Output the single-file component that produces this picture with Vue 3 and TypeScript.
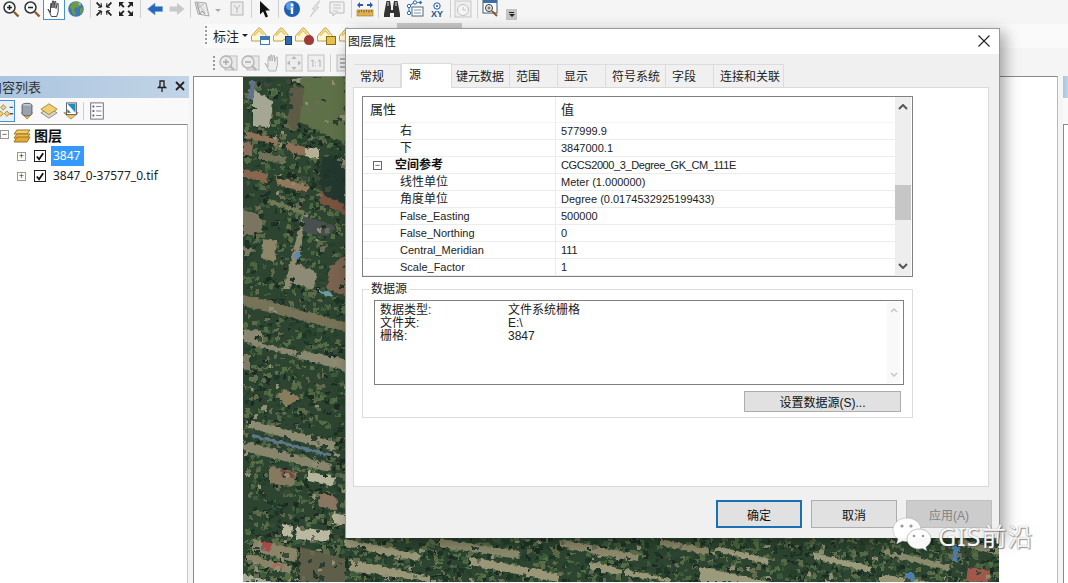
<template>
  <div class="app">
    <!-- 아이콘 심볼 -->
    <svg class="defs" width="0" height="0">
      <filter id="photo" x="0" y="0" width="100%" height="100%">
        <feTurbulence type="fractalNoise" baseFrequency="0.22" numOctaves="2" seed="4" result="n" />
        <feDisplacementMap in="SourceGraphic" in2="n" scale="5" xChannelSelector="R" yChannelSelector="G" />
        <feGaussianBlur stdDeviation="0.55" />
      </filter>
      <symbol id="i-zoomin" viewBox="0 0 18 18"><circle cx="7.5" cy="7.5" r="5.5" fill="#f4f8f8" stroke="#333" stroke-width="1.5"/><path d="M5 7.5h5M7.5 5v5" stroke="#222" stroke-width="1.5"/><path d="M12 12l4.5 4.5" stroke="#8a5a2a" stroke-width="2.4"/></symbol>
      <symbol id="i-zoomout" viewBox="0 0 18 18"><circle cx="7.5" cy="7.5" r="5.5" fill="#f4f8f8" stroke="#333" stroke-width="1.5"/><path d="M5 7.5h5" stroke="#222" stroke-width="1.5"/><path d="M12 12l4.5 4.5" stroke="#8a5a2a" stroke-width="2.4"/></symbol>
      <symbol id="i-hand" viewBox="0 0 18 18"><path d="M3 9l2.500 3.500V6l.7-3 .8 5 .5-7h1l.5 7 .8-6.500h1l.2 7 1.200-5h1v8l-1.500 5H6.500z" fill="#fff" stroke="#333" stroke-width=".9"/></symbol>
      <symbol id="i-globe" viewBox="0 0 18 18"><circle cx="9" cy="9" r="7.800" fill="#3b79b8"/><path d="M5 3l5-1.500 3 3-2 3-3 0-1 3 2 3-1 2.500-3-3-.5-4-2-2zM13 8l3 .5-.5 4-2.500 2z" fill="#6f9a3f"/><path d="M11 2l3 2-1 2z" fill="#d9c98c"/></symbol>
      <symbol id="i-fin" viewBox="0 0 18 18"><path d="M2 2l4 4V3l1 4-4 .5h2.500L1.500 3.500zM16 2l-4 4V3l-1 4 4 .5h-2.500l4-4zM2 16l4-4v3l1-4-4-.5h2.500l-4 4zM16 16l-4-4v3l-1-4 4-.5h-2.500l4 4z" fill="#222" stroke="#222" stroke-width=".5"/></symbol>
      <symbol id="i-fout" viewBox="0 0 18 18"><path d="M7 2H2v5l1.700-1.700 2.500 2.500 1.400-1.400-2.500-2.500zM11 2h5v5l-1.700-1.700-2.500 2.500-1.400-1.400 2.500-2.500zM7 16H2v-5l1.700 1.700 2.500-2.500 1.400 1.400-2.500 2.500zM11 16h5v-5l-1.700 1.700-2.500-2.500-1.400 1.400 2.500 2.500z" fill="#222"/></symbol>
      <symbol id="i-back" viewBox="0 0 18 18"><path d="M1.500 9L9 3v3.500h7.500v5H9V15z" fill="#2a66b8" stroke="#6fa0dc" stroke-width=".6"/></symbol>
      <symbol id="i-fwd" viewBox="0 0 18 18"><path d="M16.500 9L9 3v3.500H1.500v5H9V15z" fill="#c9c9c9"/></symbol>
      <symbol id="i-sel" viewBox="0 0 18 18"><path d="M2 2l11 1 3 13-11-2z" fill="#e8e8e8" stroke="#aaa"/><path d="M5 3l7 10M3 9l8-5" stroke="#bbb"/><path d="M4 3l3 11 2-3 3 3" fill="none" stroke="#999"/></symbol>
      <symbol id="i-box" viewBox="0 0 18 18"><rect x="3" y="2" width="12" height="13" fill="#ececec" stroke="#b5b5b5"/><path d="M6 5l3 4 3-4M9 9v4" stroke="#bbb" fill="none"/></symbol>
      <symbol id="i-cursor" viewBox="0 0 18 18"><path d="M4 1l10 9.500H9.500l2.500 6-2.400 1-2.500-6L4 14.500z" fill="#111"/></symbol>
      <symbol id="i-info" viewBox="0 0 18 18"><circle cx="9" cy="9" r="8" fill="#1f5fb2"/><circle cx="7" cy="6" r="4" fill="#5f9ade"/><circle cx="9" cy="5" r="1.400" fill="#fff"/><rect x="7.800" y="7.500" width="2.400" height="6.500" fill="#fff"/></symbol>
      <symbol id="i-bolt" viewBox="0 0 18 18"><path d="M13 1L6 9h3l-5 8 9-10h-3l4-6z" fill="#e4e4e4" stroke="#c4c4c4" stroke-width=".7"/></symbol>
      <symbol id="i-ident" viewBox="0 0 18 18"><path d="M2 2h14v11H8l-3 3v-3H2z" fill="#f2f2f2" stroke="#bbb"/><path d="M5 5h8M5 8h8M5 11h5" stroke="#c4c4c4"/></symbol>
      <symbol id="i-ruler" viewBox="0 0 18 18"><path d="M1 5l3-3v2h3v2H4v2zM17 5l-3-3v2h-3v2h3v2z" fill="#2a5fa8"/><rect x="1" y="10" width="16" height="6" fill="#e0b050" stroke="#a07a28" stroke-width=".6"/><path d="M3 10v3M5.500 10v2M8 10v3M10.500 10v2M13 10v3M15.500 10v2" stroke="#6b4f16" stroke-width=".7"/></symbol>
      <symbol id="i-bino" viewBox="0 0 18 18"><path d="M3.500 1h3.500l1 6v3h2V7l1-6h3.500l2.500 13v3H11v-4H7v4H1v-3z" fill="#333"/><rect x="4" y="2" width="2" height="4" fill="#8a8a8a"/><rect x="12" y="2" width="2" height="4" fill="#8a8a8a"/></symbol>
      <symbol id="i-net" viewBox="0 0 18 18"><rect x="6" y="7" width="11" height="9" fill="#fff" stroke="#567"/><path d="M8 10h7M8 13h7" stroke="#79a"/><circle cx="3" cy="6" r="1.700" fill="#fff" stroke="#2a6aa8"/><circle cx="3" cy="13" r="1.700" fill="#fff" stroke="#2a6aa8"/><circle cx="9" cy="2.500" r="1.700" fill="#fff" stroke="#2a6aa8"/><path d="M11 2.500h3M14 1l2 1.500L14 4z" stroke="#2a6aa8" fill="#2a6aa8" stroke-width=".8"/><path d="M3 8v3M4.500 5l3-2" stroke="#2a6aa8"/></symbol>
      <symbol id="i-clock" viewBox="0 0 18 18"><rect x="1" y="1" width="16" height="16" fill="#eee" stroke="#c8c8c8"/><circle cx="9" cy="10" r="5.500" fill="#f5f5f5" stroke="#c0c0c0"/><path d="M9 7v3h3" stroke="#c0c0c0" fill="none"/></symbol>
      <symbol id="i-zw" viewBox="0 0 18 18"><rect x="1" y="0" width="14" height="13" fill="#fff" stroke="#44586f"/><rect x="1" y="0" width="14" height="3" fill="#3a6ea8"/><circle cx="7" cy="8" r="3.500" fill="#f5f5f5" stroke="#333"/><path d="M5.300 8h3.400M7 6.300v3.400" stroke="#333" stroke-width=".8"/><path d="M10 11l5 5" stroke="#8a5a2a" stroke-width="2"/></symbol>
      <symbol id="i-label" viewBox="0 0 18 18"><path d="M1.500 10l7-8h1.500l6 7v2l-6 4h-8.500z" fill="#fff6d8" stroke="#c4a040"/><path d="M3 9.500L9 3l5 5.500-1.500.8L9 5.500 5 10z" fill="#ecc968"/></symbol>
      <symbol id="i-d-in" viewBox="0 0 20 20"><rect x="7" y="3" width="12" height="14" fill="#e8e8e8" stroke="#bdbdbd"/><circle cx="8" cy="9" r="6" fill="#ececec" stroke="#b5b5b5" stroke-width="1.400"/><path d="M5 9h6M8 6v6" stroke="#aaa" stroke-width="1.400"/><path d="M12 13l4 4" stroke="#b8b8b8" stroke-width="2.400"/></symbol>
      <symbol id="i-d-out" viewBox="0 0 20 20"><rect x="7" y="3" width="12" height="14" fill="#e8e8e8" stroke="#bdbdbd"/><circle cx="8" cy="9" r="6" fill="#ececec" stroke="#b5b5b5" stroke-width="1.400"/><path d="M5 9h6" stroke="#aaa" stroke-width="1.400"/><path d="M12 13l4 4" stroke="#b8b8b8" stroke-width="2.400"/></symbol>
      <symbol id="i-d-hand" viewBox="0 0 20 20"><path d="M3 10l3 4V6l1-3 1 5 .5-6h1.200l.5 6 1-5.500h1.200l.3 6 1.500-4.500h1.200v8l-1.500 6H7z" fill="#ececec" stroke="#b5b5b5"/></symbol>
      <symbol id="i-d-full" viewBox="0 0 20 20"><rect x="2" y="2" width="16" height="16" fill="#ececec" stroke="#c4c4c4"/><path d="M10 3l2.500 3h-5zM10 17l2.500-3h-5zM3 10l3-2.500v5zM17 10l-3-2.500v5z" fill="#b5b5b5"/></symbol>
      <symbol id="i-d-one" viewBox="0 0 20 20"><rect x="2" y="2" width="16" height="16" fill="#eee" stroke="#c0c0c0"/><path d="M5 8l2-1v7M9.500 9v.8M9.500 12v.8M12 8l2-1v7" stroke="#b0b0b0" fill="none"/></symbol>
      <symbol id="i-d-last" viewBox="0 0 20 20"><rect x="3" y="2" width="14" height="16" fill="#e8e8e8" stroke="#c0c0c0"/><path d="M6 6h8M6 10h8M6 14h8" stroke="#aaa" stroke-width="2"/></symbol>
      <symbol id="i-toc1" viewBox="0 0 20 20"><path d="M4 6l3-3 3 3-3 3z" fill="#f2cf7a" stroke="#a8842c"/><path d="M1 13l3-3 3 3-3 3z" fill="#f2cf7a" stroke="#a8842c"/><path d="M8 13l3-3 3 3-3 3z" fill="#f2cf7a" stroke="#a8842c"/><path d="M14 6h4M14 13h4" stroke="#555" stroke-width="1.500"/></symbol>
      <symbol id="i-toc2" viewBox="0 0 20 20"><path d="M4 12h12l-6 7z" fill="#efc45e" stroke="#b48a2c"/><ellipse cx="10" cy="4" rx="5.500" ry="2.500" fill="#c7ccd2" stroke="#556"/><path d="M4.500 4v9c0 1.500 2.500 2.500 5.500 2.500s5.500-1 5.500-2.500V4" fill="#9aa3ad" stroke="#556"/></symbol>
      <symbol id="i-toc3" viewBox="0 0 20 20"><path d="M1 12l9-5 9 5-9 6z" fill="#d7d7d0" stroke="#888"/><path d="M1 8l9-6 9 6-9 6z" fill="#f0ce76" stroke="#a8842c"/></symbol>
      <symbol id="i-toc4" viewBox="0 0 20 20"><path d="M2 12h16l-8 7z" fill="#efc45e" stroke="#b48a2c"/><rect x="5" y="1" width="11" height="13" fill="#fff" stroke="#556"/><path d="M6 2h9v10z" fill="#1f8fb5"/><path d="M6 8l4 4H6z" fill="#2a6a9a"/></symbol>
      <symbol id="i-list" viewBox="0 0 20 20"><rect x="3" y="1" width="14" height="18" fill="#fbfbfb" stroke="#667"/><rect x="5" y="4" width="2" height="2" fill="#555"/><rect x="5" y="9" width="2" height="2" fill="#555"/><rect x="5" y="14" width="2" height="2" fill="#555"/><path d="M9 5h6M9 10h6M9 15h6" stroke="#778"/></symbol>
      <symbol id="i-layers" viewBox="0 0 18 16"><path d="M4 3h13l-3 4H1z" fill="#f4cd72" stroke="#9a7420"/><path d="M4 7h13l-3 4H1z" fill="#eebb50" stroke="#9a7420"/><path d="M4 10h13l-3 5H1z" fill="#e5a93a" stroke="#9a7420"/></symbol>
    </svg>

    <!-- 상단 툴바 -->
    <div class="toolbar-main">
      <template v-for="(item, i) in mainTools" :key="i">
        <span v-if="item.icon === 'sep'" class="sep" :style="{ width: item.w + 'px' }"></span>
        <span v-else-if="item.icon === 'caret'" class="tool-slot caret-slot" :style="{ width: item.w + 'px' }"><i class="caret dim"></i></span>
        <span v-else-if="item.icon === 'xy'" class="tool-slot xy" :style="{ width: item.w + 'px' }">
          <svg width="10" height="8" viewBox="0 0 10 8"><circle cx="5" cy="4" r="3.200" fill="none" stroke="#1d5ea8"/><circle cx="5" cy="4" r="1" fill="#1d5ea8"/></svg>
          <b>XY</b>
        </span>
        <span v-else class="tool-slot" :class="{ active: item.icon === 'hand' }" :style="{ width: item.w + 'px' }">
          <svg class="ico"><use :href="'#i-' + item.icon" /></svg>
        </span>
      </template>
      <span class="overflow"><i class="bar"></i><i class="caret"></i></span>
    </div>

    <div class="toolbar-label">
      <span class="grip"></span>
      <span class="label-menu">标注<i class="caret"></i></span>
      <span v-for="n in labelIcons" :key="n" class="label-icon">
        <svg class="ico"><use href="#i-label" /></svg>
        <i class="mark" :class="n"></i>
      </span>
      <span class="ghost-tab"></span>
    </div>

    <div class="toolbar-dim">
      <span class="grip short"></span>
      <svg v-for="n in dimIcons" :key="n" class="dim-ico"><use :href="'#i-d-' + n" /></svg>
      <span class="sep dim-sep"></span>
      <svg class="dim-ico"><use href="#i-d-last" /></svg>
    </div>

    <div class="workspace">
      <!-- 내용 목록 -->
      <aside class="toc">
        <div class="dock-head">
          <span class="dock-title">内容列表</span>
          <span class="dock-btns">
            <svg width="10" height="12" viewBox="0 0 10 12"><path d="M3 1h4v5l1.500 1.500h-7L3 6zM5 7.500V12" fill="none" stroke="#222" stroke-width="1.300"/></svg>
            <svg width="10" height="10" viewBox="0 0 10 10"><path d="M1 1l8 8M9 1l-8 8" stroke="#222" stroke-width="1.800"/></svg>
          </span>
        </div>
        <div class="toc-tools">
          <span class="toc-tool on"><svg class="toc-ico"><use href="#i-toc1" /></svg></span>
          <span class="toc-tool"><svg class="toc-ico"><use href="#i-toc2" /></svg></span>
          <span class="toc-tool"><svg class="toc-ico"><use href="#i-toc3" /></svg></span>
          <span class="toc-tool"><svg class="toc-ico"><use href="#i-toc4" /></svg></span>
          <span class="sep toc-sep"></span>
          <span class="toc-tool"><svg class="toc-ico"><use href="#i-list" /></svg></span>
        </div>
        <div class="tree">
          <div class="tree-row root">
            <span class="exp">−</span>
            <svg class="layers" width="18" height="16"><use href="#i-layers" /></svg>
            <b class="root-name">图层</b>
          </div>
          <div v-for="(l, i) in layers" :key="l" class="tree-row child">
            <span class="exp">+</span>
            <span class="check"><svg width="11" height="11" viewBox="0 0 11 11"><path d="M2 5.500l2.500 3L9 2" fill="none" stroke="#111" stroke-width="2"/></svg></span>
            <span class="layer-name" :class="{ selected: i === 0 }">{{ l }}</span>
          </div>
        </div>
      </aside>

      <!-- 지도 -->
      <main class="map-frame">
        <svg class="map" viewBox="243 78 756 505" width="756" height="505" preserveAspectRatio="none">
          <rect x="243" y="78" width="756" height="505" fill="#2d4530" />
          <g filter="url(#photo)">
            <rect v-for="(s, i) in speckles" :key="'s' + i" :x="s.x" :y="s.y" :width="s.w" :height="s.h" :fill="s.c" />
            <polygon v-for="(p, i) in mapShapes" :key="'p' + i" :points="p.pts" :fill="p.c" />
            <rect v-for="(s, i) in roofSpeckles" :key="'r' + i" :x="s.x" :y="s.y" :width="s.w" :height="s.h" :fill="s.c" />
          </g>
        </svg>
      </main>

      <aside class="dock-right">
        <div class="dock-head"></div>
        <div class="right-tools"></div>
        <div class="tree"></div>
      </aside>
    </div>

    <!-- 图层属性 대화상자 -->
    <section class="dialog">
      <header class="dialog-title">
        <span>图层属性</span>
        <svg width="12" height="12" viewBox="0 0 12 12"><path d="M.5.5l11 11M11.500.5l-11 11" stroke="#222" stroke-width="1.100"/></svg>
      </header>
      <div class="dialog-body">
        <div class="tabs">
          <span
            v-for="t in tabs"
            :key="t.name"
            class="tab"
            :class="{ current: t.name === '源' }"
            :style="{ width: t.w + 'px' }"
          >{{ t.name }}</span>
        </div>
        <div class="tab-panel">
          <div class="prop-grid">
            <div class="prop-table">
              <div class="prop-row head">
                <span class="col-a">属性</span>
                <span class="col-b">值</span>
              </div>
              <div v-for="r in props" :key="r.k" class="prop-row" :class="{ group: r.group }">
                <span class="col-a" :class="{ latin: isLatin(r.k) }">
                  <i v-if="r.group" class="exp small">−</i>
                  {{ r.k }}
                </span>
                <span class="col-b">{{ r.v }}</span>
              </div>
            </div>
            <div class="scrollbar">
              <svg width="10" height="6" viewBox="0 0 10 6"><path d="M1 5l4-4 4 4" fill="none" stroke="#555" stroke-width="2"/></svg>
              <span class="thumb"></span>
              <svg width="10" height="6" viewBox="0 0 10 6"><path d="M1 1l4 4 4-4" fill="none" stroke="#555" stroke-width="2"/></svg>
            </div>
          </div>

          <fieldset class="source">
            <legend>数据源</legend>
            <div class="source-list">
              <div v-for="s in sourceInfo" :key="s.k" class="source-line">
                <span class="source-key">{{ s.k }}</span>
                <span>{{ s.v }}</span>
              </div>
              <div class="list-scroll">
                <svg width="8" height="5" viewBox="0 0 8 5"><path d="M1 4l3-3 3 3" fill="none" stroke="#c8c8c8" stroke-width="1.500"/></svg>
                <svg width="8" height="5" viewBox="0 0 8 5"><path d="M1 1l3 3 3-3" fill="none" stroke="#c8c8c8" stroke-width="1.500"/></svg>
              </div>
            </div>
            <div class="source-actions">
              <button class="btn set-source">设置数据源(S)...</button>
            </div>
          </fieldset>
        </div>
        <div class="dialog-actions">
          <button class="btn primary">确定</button>
          <button class="btn">取消</button>
          <button class="btn disabled">应用(A)</button>
        </div>
      </div>
    </section>

    <!-- 워터마크 -->
    <div class="watermark">
      <svg width="40" height="36" viewBox="0 0 40 36">
        <path d="M15 1C7 1 1 6 1 13c0 4 2 7 5 9l-1.500 5 6-3c1.500.4 3 .6 4.500.6 8 0 14-5 14-11.600S23 1 15 1z" fill="#fff" fill-opacity=".95" stroke="#999" stroke-opacity=".4"/>
        <path d="M27 12c-6.500 0-12 4.300-12 10s5.500 10 12 10c1.200 0 2.500-.2 3.600-.5l4.400 2.500-1.200-4c3.200-1.800 5.200-4.700 5.200-8 0-5.700-5.500-10-12-10z" fill="#fff" fill-opacity=".97" stroke="#888" stroke-opacity=".5"/>
        <circle cx="10" cy="9" r="1.600" fill="#999"/><circle cx="19" cy="9" r="1.600" fill="#999"/>
        <circle cx="22" cy="19" r="1.300" fill="#999"/><circle cx="31" cy="19" r="1.300" fill="#999"/>
      </svg>
      <span>GIS前沿</span>
    </div>
  </div>
</template>

<script setup lang="ts">
interface Speckle {
  x: number;
  y: number;
  w: number;
  h: number;
  c: string;
}

const mainTools = [
  { icon: "zoomin", w: 21 },
  { icon: "zoomout", w: 22 },
  { icon: "hand", w: 22 },
  { icon: "globe", w: 22 },
  { icon: "sep", w: 6 },
  { icon: "fin", w: 22 },
  { icon: "fout", w: 22 },
  { icon: "sep", w: 6 },
  { icon: "back", w: 23 },
  { icon: "fwd", w: 22 },
  { icon: "sep", w: 4 },
  { icon: "sel", w: 20 },
  { icon: "caret", w: 12 },
  { icon: "box", w: 25 },
  { icon: "sep", w: 4 },
  { icon: "cursor", w: 23 },
  { icon: "sep", w: 4 },
  { icon: "info", w: 24 },
  { icon: "bolt", w: 22 },
  { icon: "ident", w: 22 },
  { icon: "sep", w: 6 },
  { icon: "ruler", w: 22 },
  { icon: "sep", w: 4 },
  { icon: "bino", w: 24 },
  { icon: "net", w: 22 },
  { icon: "xy", w: 22 },
  { icon: "sep", w: 4 },
  { icon: "clock", w: 22 },
  { icon: "sep", w: 6 },
  { icon: "zw", w: 22 },
];

const labelIcons = ["list", "sort", "fire", "lock", "last"];
const dimIcons = ["in", "out", "hand", "full", "one"];
const layers = ["3847", "3847_0-37577_0.tif"];

const tabs = [
  { name: "常规", w: 47 },
  { name: "源", w: 51 },
  { name: "键元数据", w: 58 },
  { name: "范围", w: 48 },
  { name: "显示", w: 48 },
  { name: "符号系统", w: 60 },
  { name: "字段", w: 48 },
  { name: "连接和关联", w: 70 },
];

const props = [
  { k: "右", v: "577999.9" },
  { k: "下", v: "3847000.1" },
  { k: "空间参考", v: "CGCS2000_3_Degree_GK_CM_111E", group: true },
  { k: "线性单位", v: "Meter (1.000000)" },
  { k: "角度单位", v: "Degree (0.0174532925199433)" },
  { k: "False_Easting", v: "500000" },
  { k: "False_Northing", v: "0" },
  { k: "Central_Meridian", v: "111" },
  { k: "Scale_Factor", v: "1" },
];

const isLatin = (s: string) => /^[A-Za-z_]+$/.test(s);

const sourceInfo = [
  { k: "数据类型:", v: "文件系统栅格" },
  { k: "文件夹:", v: "E:\\" },
  { k: "栅格:", v: "3847" },
];

// 지도 좌표는 페이지 좌표 기준
const mapShapes = [
  { c: "#5d6f47", pts: "300,78 345,78 345,145 300,123" },
  { c: "#5d5a45", pts: "290,90 305,87 297,133 288,127" },
  { c: "#a5a794", pts: "253,90 273,103 270,128 253,127" },
  { c: "#5e7288", pts: "250,82 256,82 253,100 248,100" },
  { c: "#8f7358", pts: "245,132 279,140 277,147 245,138" },
  { c: "#8a6e5c", pts: "243,143 253,145 252,157 243,157" },
  { c: "#8e6f57", pts: "287,143 305,148 305,157 287,152" },
  { c: "#b5b095", pts: "305,148 319,150 319,160 305,157" },
  { c: "#6e7258", pts: "258,153 287,158 285,165 258,160" },
  { c: "#7a5240", pts: "318,190 345,205 345,215 322,207" },
  { c: "#24392f", pts: "323,157 345,160 345,205 325,197 318,183" },
  { c: "#8a6650", pts: "243,170 268,175 267,183 243,178" },
  { c: "#94785c", pts: "277,178 309,187 307,194 276,185" },
  { c: "#6f7a55", pts: "270,200 305,212 303,216 268,204" },
  { c: "#7a7560", pts: "243,210 262,218 262,233 243,237" },
  { c: "#8d8a70", pts: "303,215 308,215 290,290 283,290" },
  { c: "#4a5050", pts: "303,217 337,227 327,237 303,233" },
  { c: "#8e8668", pts: "263,240 277,242 275,262 262,260" },
  { c: "#7d7860", pts: "243,248 253,250 252,256 243,256" },
  { c: "#5d88b5", pts: "297,252 302,252 298,260 294,260" },
  { c: "#8d8b74", pts: "293,263 317,273 313,290 290,283" },
  { c: "#7a6450", pts: "330,267 345,257 345,297 327,290" },
  { c: "#6f9aa8", pts: "318,290 332,295 331,298 318,293" },
  { c: "#777359", pts: "243,295 345,323 345,332 243,307" },
  { c: "#8b8872", pts: "243,330 262,332 262,345 345,360 345,372 243,343" },
  { c: "#7e7c62", pts: "243,355 250,355 250,372 243,370" },
  { c: "#8a7c5f", pts: "277,395 287,390 300,400 285,408" },
  { c: "#8d8b72", pts: "247,420 335,443 335,452 245,428" },
  { c: "#5c7888", pts: "253,435 332,455 330,458 253,438" },
  { c: "#87856c", pts: "243,442 332,465 330,473 243,452" },
  { c: "#85795e", pts: "270,467 297,473 293,487 270,485" },
  { c: "#7a4a3c", pts: "280,470 295,474 294,480 282,478" },
  { c: "#b5b59c", pts: "308,472 335,478 333,487 308,482" },
  { c: "#8a7660", pts: "320,493 338,500 337,512 318,507" },
  { c: "#b5b09a", pts: "333,513 345,516 345,527 333,525" },
  { c: "#bab8a0", pts: "283,525 293,527 292,538 283,537" },
  { c: "#bab8a0", pts: "297,528 330,532 327,543 296,540" },
  { c: "#8a8468", pts: "253,540 297,550 295,563 253,552" },
  { c: "#a84a4a", pts: "262,542 272,543 270,552 262,550" },
  { c: "#8a8468", pts: "247,555 292,567 290,575 247,563" },
  { c: "#a86a5a", pts: "273,563 283,566 282,572 273,570" },
  { c: "#a9aa96", pts: "243,575 273,583 243,583" },
  { c: "#5e5f4a", pts: "300,548 345,560 345,583 300,583" },
  { c: "#9a9678", pts: "345,540 420,555 418,562 345,547" },
  { c: "#9a9678", pts: "350,560 430,578 430,583 350,572" },
  { c: "#8a8a6c", pts: "440,540 520,552 518,560 440,548" },
  { c: "#9a9678", pts: "470,558 560,575 558,583 470,566" },
  { c: "#8f8a6c", pts: "560,540 640,556 638,563 560,548" },
  { c: "#9a9678", pts: "590,563 670,580 668,583 590,571" },
  { c: "#8f8a6c", pts: "660,540 710,550 708,556 660,546" },
  { c: "#9c9a7c", pts: "717,547 770,560 768,565 715,552" },
  { c: "#9c9a7c", pts: "813,553 872,568 870,573 813,560" },
  { c: "#8a8a6c", pts: "885,550 950,566 948,572 885,556" },
  { c: "#9c9a7c", pts: "700,568 770,583 700,583" },
  { c: "#4f7fa8", pts: "953,546 960,546 958,562 951,562" },
  { c: "#a0584c", pts: "968,568 990,572 988,583 966,583" },
  { c: "#9a9678", pts: "880,575 930,583 880,583" },
  { c: "#4f7fa8", pts: "905,574 915,574 914,583 905,583" },
  { c: "#8a8a6c", pts: "960,540 999,550 999,556 958,546" },
];

// 시드 고정 난수: 위성사진 질감
const makeSpeckles = (seed: number, count: number, colors: string[]): Speckle[] => {
  let s = seed;
  const next = () => {
    s = (s * 16807) % 2147483647;
    return (s - 1) / 2147483646;
  };
  const out: Speckle[] = [];
  for (let i = 0; i < count; i++) {
    const bottom = next() < 0.45;
    const x = bottom ? 243 + next() * 756 : 243 + next() * 102;
    const y = bottom ? 537 + next() * 46 : 78 + next() * 505;
    out.push({
      x: Math.round(x),
      y: Math.round(y),
      w: 2 + Math.round(next() * 4),
      h: 2 + Math.round(next() * 3),
      c: colors[Math.floor(next() * colors.length)],
    });
  }
  return out;
};

const speckles = makeSpeckles(17, 3000, ["#1f3526", "#24402c", "#3e5a3a", "#4b6640", "#566c44", "#1a2c22", "#5f6a4c"]);
const roofSpeckles = makeSpeckles(91, 420, ["#2a3d30", "#8f8d76", "#1f3526", "#6b6d56", "#3a4a38"]);
</script>

<style>
html,
body {
  margin: 0;
  background: #f5f5f5;
}
</style>

<style scoped>
.app {
  position: relative;
  width: 1068px;
  height: 583px;
  overflow: hidden;
  background: #f5f5f5;
  font-family: "Liberation Sans", "Noto Sans CJK SC", sans-serif;
  font-size: 12px;
  color: #222;
}

.defs {
  position: absolute;
}

.toolbar-main {
  display: flex;
  height: 24px;
  align-items: flex-start;
}

.tool-slot {
  display: flex;
  justify-content: center;
  height: 20px;
  box-sizing: border-box;
}

.tool-slot.active {
  background: #fbfdff;
  border: 1px solid #4a90d0;
  border-top: none;
}

.ico {
  width: 18px;
  height: 18px;
}

.sep {
  display: flex;
  justify-content: center;
  height: 18px;
  position: relative;
}

.sep::before {
  content: "";
  width: 1px;
  height: 100%;
  background: #cfcfcf;
}

.caret-slot {
  align-items: center;
  padding-top: 0;
}

.caret {
  display: inline-block;
  width: 0;
  height: 0;
  border-left: 3px solid transparent;
  border-right: 3px solid transparent;
  border-top: 3px solid #222;
}

.caret.dim {
  border-top-color: #aaa;
}

.xy {
  flex-direction: column;
  align-items: center;
  font-size: 9px;
  line-height: 9px;
  color: #1d4f95;
}

.xy svg {
  display: block;
}

.overflow {
  display: flex;
  flex-direction: column;
  align-items: center;
  gap: 1px;
  width: 11px;
  height: 11px;
  margin: 9px 0 0 4px;
  padding-top: 3px;
  box-sizing: border-box;
  background: #c4c4c4;
}

.bar {
  width: 5px;
  height: 1px;
  background: #222;
}

.toolbar-label {
  display: flex;
  align-items: center;
  height: 24px;
  margin-left: 204px;
  background: #fafafa;
}

.grip {
  width: 2px;
  height: 20px;
  margin-left: 1px;
  background: repeating-linear-gradient(to bottom, #9a9a9a 0 2px, transparent 2px 4px);
}

.grip.short {
  height: 14px;
  margin: 0 3px 0 1px;
}

.label-menu {
  display: flex;
  align-items: center;
  gap: 3px;
  width: 37px;
  margin-left: 6px;
  font-size: 13px;
  margin-top: -2px;
}

.label-icon {
  position: relative;
  width: 22px;
  height: 18px;
  margin-top: -2px;
}

.mark {
  position: absolute;
  right: 2px;
  bottom: -1px;
  width: 10px;
  height: 9px;
  background: linear-gradient(#3b78b8 0 3px, #fff 3px);
  border: 1px solid #3b78b8;
  box-sizing: border-box;
}

.mark.sort {
  width: 7px;
  background: #2a6ab0;
  border-color: #173f7a;
}

.mark.fire {
  height: 10px;
  border: none;
  border-radius: 50% 50% 45% 45%;
  background: #a03a3a;
}

.mark.lock {
  height: 9px;
  background: #e2c14c;
  border-color: #8a6c16;
}

.mark.last {
  display: none;
}

.ghost-tab {
  align-self: flex-start;
  width: 65px;
  height: 5px;
  margin: -1px 0 0 37px;
  background: #c9c9c9;
}

.toolbar-dim {
  display: flex;
  align-items: center;
  height: 28px;
  margin-left: 212px;
  padding-top: 1px;
  box-sizing: border-box;
}

.dim-ico {
  width: 20px;
  height: 20px;
  margin-right: 2px;
  flex: none;
}

.dim-sep {
  width: 7px;
  margin-left: -1px;
}

.workspace {
  display: flex;
  height: 507px;
}

.toc {
  width: 189px;
  flex: none;
  display: flex;
  flex-direction: column;
}

.dock-head {
  display: flex;
  align-items: center;
  justify-content: space-between;
  height: 22px;
  flex: none;
  background: linear-gradient(to right, #abc5df, #c2d4e6);
}

.dock-title {
  margin-left: -11px;
  margin-top: -1px;
  font-size: 13px;
  color: #333;
}

.dock-btns {
  display: flex;
  align-items: center;
  gap: 8px;
  margin-right: 4px;
  margin-top: -2px;
}

.toc-tools {
  display: flex;
  align-items: center;
  height: 26px;
  flex: none;
  margin-left: -3px;
  background: #f9f9f9;
}

.toc-tool {
  display: flex;
  justify-content: center;
  align-items: center;
  width: 22px;
  height: 22px;
  box-sizing: border-box;
}

.toc-tool.on {
  width: 18px;
  margin-right: 1px;
  border: 1px solid #4a90d0;
  background: #e6f1fb;
}

.toc-ico {
  width: 18px;
  height: 18px;
  flex: none;
}

.toc-sep {
  width: 6px;
  margin-left: -2px;
}

.tree {
  flex: 1;
  width: 188px;
  box-sizing: border-box;
  background: #fff;
  border-top: 1px solid #8a8a8a;
  border-right: 1px solid #c8c8c8;
}

.tree-row {
  display: flex;
  align-items: center;
  height: 20px;
  box-sizing: border-box;
}

.tree-row.root {
  height: 21px;
  padding-bottom: 2px;
}

.child {
  padding-left: 17px;
}

.exp {
  display: inline-flex;
  align-items: center;
  justify-content: center;
  width: 9px;
  height: 9px;
  box-sizing: border-box;
  border: 1px solid #999;
  font-size: 9px;
  line-height: 1;
  font-style: normal;
  color: #333;
  font-family: "Liberation Sans", sans-serif;
  background: #fff;
}

.layers {
  margin-left: 4px;
}

.root-name {
  margin-left: 3px;
  font-size: 14px;
  color: #111;
}

.check {
  display: flex;
  align-items: center;
  justify-content: center;
  width: 12px;
  height: 12px;
  box-sizing: border-box;
  margin-left: 8px;
  border: 1px solid #222;
  background: #fff;
}

.layer-name {
  margin-left: 5px;
  padding: 0 2px 0 2px;
  line-height: 20px;
  font-size: 12px;
  font-family: "Noto Sans", sans-serif;
  color: #222;
}

.layer-name.selected {
  background: #3399ff;
  color: #fff;
  padding-right: 4px;
}

.map-frame {
  width: 865px;
  flex: none;
  box-sizing: border-box;
  margin-left: 4px;
  padding-left: 49px;
  background: #fff;
  border-top: 1px solid #8a8a8a;
  border-left: 1px solid #8a8a8a;
  border-right: 1px solid #bbb;
  overflow: hidden;
}

.map {
  display: block;
}

.dock-right {
  width: 10px;
  margin-left: 5px;
  display: flex;
  flex-direction: column;
}

.right-tools {
  height: 26px;
  flex: none;
  background: #f9f9f9;
}

.dock-right .tree {
  width: auto;
  border-left: 1px solid #8a8a8a;
  border-right: none;
}

/* 대화상자 */
.dialog {
  position: absolute;
  left: 345px;
  top: 28px;
  width: 655px;
  height: 510px;
  box-sizing: border-box;
  display: flex;
  flex-direction: column;
  background: #f0f0f0;
  border: 1px solid #9a9a9a;
  border-bottom: none;
  box-shadow: 5px 4px 14px rgba(0, 0, 0, 0.35);
}

.dialog-title {
  display: flex;
  align-items: center;
  justify-content: space-between;
  height: 25px;
  flex: none;
  box-sizing: border-box;
  padding: 0 9px 2px 2px;
  background: #fff;
  font-size: 12px;
}

.dialog-body {
  flex: 1;
  padding: 10px 10px 0 7px;
}

.tabs {
  display: flex;
  height: 23px;
  padding-left: 1px;
}

.tab {
  position: relative;
  box-sizing: border-box;
  height: 23px;
  padding: 3px 0 0 6px;
  line-height: 18px;
  border: 1px solid #dcdcdc;
  border-left: none;
  border-bottom: none;
  background: #f0f0f0;
}

.tab.current {
  z-index: 1;
  height: 25px;
  margin-top: -1px;
  padding: 2px 0 0 7px;
  border-left: 1px solid #dcdcdc;
  background: #fff;
}

.tab.current + .tab {
  padding-left: 4px;
}

.tab-panel {
  box-sizing: border-box;
  height: 400px;
  padding: 8px 8px 0 8px;
  background: #fff;
  border: 1px solid #d9d9d9;
}

.prop-grid {
  display: flex;
  width: 551px;
  height: 181px;
  box-sizing: border-box;
  border: 1px solid #808080;
}

.prop-table {
  flex: 1;
  min-width: 0;
}

.prop-row {
  display: flex;
  height: 17px;
  line-height: 16px;
  border-bottom: 1px solid #ececec;
  font-size: 11px;
  box-sizing: border-box;
  white-space: nowrap;
}

.prop-row.head {
  height: 26px;
  line-height: 26px;
  font-size: 13px;
  border-bottom-color: #f4f4f4;
}

.col-a {
  display: flex;
  align-items: center;
  width: 193px;
  flex: none;
  padding-left: 37px;
  box-sizing: border-box;
  border-right: 1px solid #ececec;
  font-size: 12px;
}

.col-a.latin {
  font-size: 11px;
}

.head .col-a {
  padding-left: 7px;
  font-size: 13px;
}

.col-b {
  padding-left: 5px;
}

.group .col-a {
  padding-left: 10px;
  font-weight: bold;
  color: #111;
}

.group .col-b {
  letter-spacing: -0.4px;
}

.exp.small {
  margin-right: 13px;
  font-weight: normal;
  border-color: #666;
}

.scrollbar {
  position: relative;
  display: flex;
  flex-direction: column;
  align-items: center;
  justify-content: space-between;
  width: 16px;
  flex: none;
  margin-right: 1px;
  padding: 7px 0;
  box-sizing: border-box;
  background: #eeeeee;
}

.thumb {
  position: absolute;
  left: 0;
  top: 88px;
  width: 100%;
  height: 35px;
  background: #c6c6c6;
}

.source {
  width: 551px;
  box-sizing: border-box;
  margin: 5px 0 0 0;
  padding: 4px 8px 5px 11px;
  border: 1px solid #dcdcdc;
}

.source legend {
  margin-left: -5px;
  padding: 0 3px 0 2px;
  font-size: 12px;
  line-height: 14px;
}

.source-list {
  position: relative;
  box-sizing: border-box;
  width: 530px;
  height: 85px;
  padding: 3px 5px;
  border: 1px solid #808080;
  background: #fff;
  font-size: 12px;
  line-height: 13px;
}

.source-line {
  display: flex;
  height: 13px;
}

.source-key {
  width: 128px;
  flex: none;
}

.list-scroll {
  position: absolute;
  right: 3px;
  top: 1px;
  bottom: 1px;
  width: 13px;
  display: flex;
  flex-direction: column;
  align-items: center;
  justify-content: space-between;
  padding: 6px 0;
  box-sizing: border-box;
  background: #f9f9f9;
}

.source-actions {
  display: flex;
  justify-content: flex-end;
  width: 527px;
  margin-top: 6px;
}

.btn {
  box-sizing: border-box;
  width: 86px;
  height: 28px;
  padding: 0;
  background: #e1e1e1;
  border: 1px solid #adadad;
  font-family: inherit;
  font-size: 12px;
  color: #111;
}

.btn.set-source {
  width: 157px;
  height: 21px;
}

.btn.primary {
  border: 2px solid #1a70b5;
}

.btn.disabled {
  background: #cccccc;
  border-color: #bfbfbf;
  color: #838383;
}

.dialog-actions {
  display: flex;
  justify-content: flex-end;
  gap: 9px;
  margin-top: 13px;
  margin-right: -3px;
}

/* 워터마크 */
.watermark {
  position: absolute;
  left: 892px;
  top: 517px;
  display: flex;
  align-items: center;
  gap: 6px;
  color: rgba(255, 255, 255, 0.95);
  font-family: "Noto Sans", "Noto Sans CJK SC", sans-serif;
  font-size: 25px;
  letter-spacing: 1px;
  text-shadow: 0 0 1px #777, 1px 1px 1px rgba(60, 60, 60, 0.55);
  white-space: nowrap;
}
</style>
